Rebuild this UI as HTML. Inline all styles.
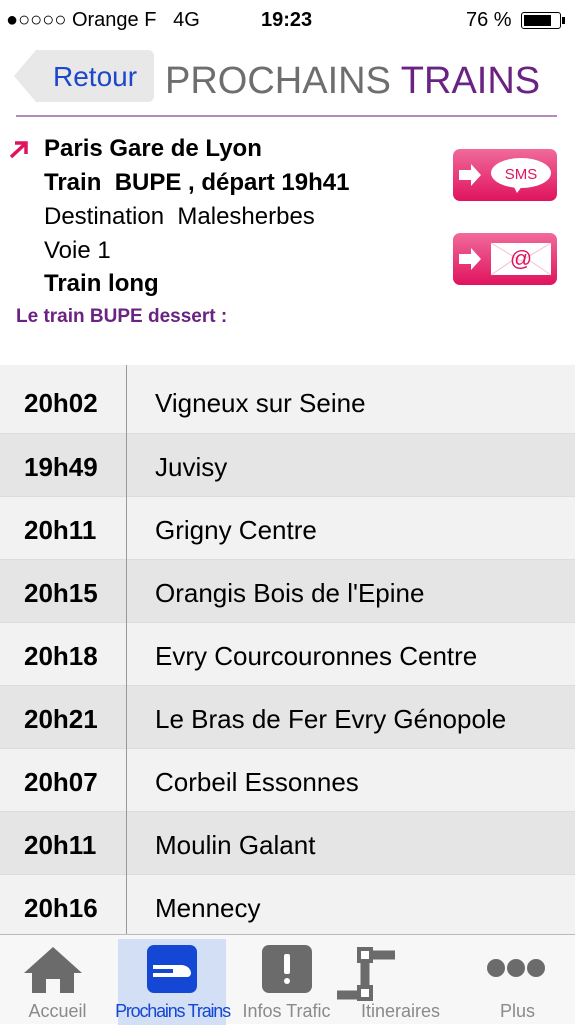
<!DOCTYPE html><html><head><meta charset="utf-8"><style>
*{margin:0;padding:0;box-sizing:border-box}
body{width:575px;height:1024px;overflow:hidden;background:#fff;font-family:"Liberation Sans",sans-serif;position:relative}
.sb{position:absolute;top:0;left:0;width:575px;height:40px;font-size:20px;color:#000}
.sb span{position:absolute;top:9px}
.hdr{position:absolute;top:40px;left:0;width:575px;height:78px}
.back{position:absolute;left:14px;top:10px;width:140px;height:52px;background:#e8e8e8;clip-path:polygon(22px 0,100% 0,100% 100%,22px 100%,0 50%);border-radius:0 6px 6px 0}
.back span{position:absolute;left:39px;top:11px;font-size:28px;color:#1c47c8}
.title{position:absolute;left:165px;top:20px;font-size:38px;color:#6e6e6e;letter-spacing:0}
.title b{font-weight:normal;color:#6a2382}
.line{position:absolute;top:115px;left:16px;width:541px;height:2px;background:#b58cb8}
.info{position:absolute;left:44px;font-size:24px;color:#000}
.btn{position:absolute;left:453px;width:104px;height:52px;border-radius:7px;background:linear-gradient(#f06a9a,#e0135e)}
.rows{position:absolute;top:365px;left:0;width:575px}
.row{height:63px;position:relative;font-size:26px;border-top:1px solid #ddd}
.row .t{position:absolute;left:24px;top:18px;font-weight:bold}
.row .n{position:absolute;left:155px;top:18px}
.tab{position:absolute;top:934px;left:0;width:575px;height:90px;background:#f7f7f7;border-top:1px solid #bbb}
.tab .l{position:absolute;top:66px;font-size:18px;color:#8a8a8a;width:115px;text-align:center}
</style></head><body>
<div class="sb"><span style="left:6px">●○○○○ Orange F&nbsp;&nbsp; 4G</span><span style="left:261px;font-weight:bold">19:23</span><span style="left:466px">76 %</span>
<div style="position:absolute;left:521px;top:12px;width:40px;height:17px;border:1.5px solid #000;border-radius:3px"><div style="margin:1.5px;width:27px;height:11px;background:#000"></div></div><div style="position:absolute;left:562px;top:17px;width:3px;height:7px;background:#000"></div></div>
<div class="hdr"><div class="back"><span>Retour</span></div><div class="title">PROCHAINS <b>TRAINS</b></div></div>
<div class="line"></div>
<svg style="position:absolute;left:8px;top:140px" width="22" height="20"><path d="M3 17 L17 4 M7 3 H18 V14" stroke="#e0135e" stroke-width="3.5" fill="none"/></svg>
<div class="info" style="top:135px;font-weight:bold">Paris Gare de Lyon</div>
<div class="info" style="top:169px;font-weight:bold">Train&nbsp; BUPE , départ 19h41</div>
<div class="info" style="top:203px">Destination&nbsp; Malesherbes</div>
<div class="info" style="top:237px">Voie 1</div>
<div class="info" style="top:270px;font-weight:bold">Train long</div>
<div style="position:absolute;left:16px;top:306px;font-size:19px;font-weight:bold;color:#6a2382">Le train BUPE dessert :</div>
<div class="btn" style="top:149px"><svg width="104" height="52"><path d="M6 21h12v-6l10 11-10 11v-6H6z" fill="#fff"/><ellipse cx="68" cy="24" rx="30" ry="15" fill="#fff"/><path d="M60 36l4 8 6-8z" fill="#fff"/><text x="68" y="30" font-size="15" fill="#e0135e" text-anchor="middle" font-family="Liberation Sans">SMS</text></svg></div>
<div class="btn" style="top:233px"><svg width="104" height="52"><path d="M6 21h12v-6l10 11-10 11v-6H6z" fill="#fff"/><rect x="38" y="10" width="60" height="32" fill="#fff"/><path d="M38 10l30 18 30-18M38 42l22-15M98 42l-22-15" stroke="#f2c0d0" fill="none"/><text x="68" y="33" font-size="22" fill="#e0135e" text-anchor="middle" font-family="Liberation Sans">@</text></svg></div>
<div class="rows" style="box-shadow:0 -2px 3px #ccc inset">
<div class="row" style="background:#f2f2f2;border-top:0;height:68px"><span class="t" style="top:23px">20h02</span><span class="n" style="top:23px">Vigneux sur Seine</span></div>
<div class="row" style="background:#e5e5e5"><span class="t">19h49</span><span class="n">Juvisy</span></div>
<div class="row" style="background:#f2f2f2"><span class="t">20h11</span><span class="n">Grigny Centre</span></div>
<div class="row" style="background:#e5e5e5"><span class="t">20h15</span><span class="n">Orangis Bois de l'Epine</span></div>
<div class="row" style="background:#f2f2f2"><span class="t">20h18</span><span class="n">Evry Courcouronnes Centre</span></div>
<div class="row" style="background:#e5e5e5"><span class="t">20h21</span><span class="n">Le Bras de Fer Evry Génopole</span></div>
<div class="row" style="background:#f2f2f2"><span class="t">20h07</span><span class="n">Corbeil Essonnes</span></div>
<div class="row" style="background:#e5e5e5"><span class="t">20h11</span><span class="n">Moulin Galant</span></div>
<div class="row" style="background:#f2f2f2"><span class="t">20h16</span><span class="n">Mennecy</span></div>
</div>
<div style="position:absolute;left:126px;top:365px;width:1px;height:570px;background:#999"></div>
<div class="tab">
<div style="position:absolute;left:118px;top:4px;width:108px;height:86px;background:#d3dff5"></div>
<svg style="position:absolute;left:22px;top:10px" width="62" height="50"><path d="M31 2L2 28h8v20h14V34h14v14h14V28h8z" fill="#6b6b6b"/></svg>
<div style="position:absolute;left:147px;top:10px;width:50px;height:48px;background:#1447d4;border-radius:7px"><svg width="50" height="48"><path d="M6 20h20v4H6zM6 28h38c0 0 0 4-4 4H6zM26 20h8c6 0 10 4 10 8H26z" fill="#fff"/></svg></div>
<div style="position:absolute;left:262px;top:10px;width:50px;height:48px;background:#6b6b6b;border-radius:7px"><div style="position:absolute;left:22px;top:9px;width:6px;height:20px;background:#fff;border-radius:2px"></div><div style="position:absolute;left:22px;top:33px;width:6px;height:6px;background:#fff;border-radius:3px"></div></div>
<svg style="position:absolute;left:335px;top:8px" width="62" height="58"><path d="M32 12h28M2 52h32M30 12v40" stroke="#6b6b6b" stroke-width="9" fill="none"/><rect x="24" y="6" width="12" height="12" fill="#fff" stroke="#6b6b6b" stroke-width="4"/><rect x="24" y="44" width="12" height="12" fill="#fff" stroke="#6b6b6b" stroke-width="4"/></svg>
<svg style="position:absolute;left:485px;top:22px" width="62" height="22"><circle cx="11" cy="11" r="9" fill="#6b6b6b"/><circle cx="31" cy="11" r="9" fill="#6b6b6b"/><circle cx="51" cy="11" r="9" fill="#6b6b6b"/></svg>
<div class="l" style="left:0">Accueil</div>
<div class="l" style="left:115px;color:#1447d4;letter-spacing:-1.2px">Prochains Trains</div>
<div class="l" style="left:229px">Infos Trafic</div>
<div class="l" style="left:343px">Itineraires</div>
<div class="l" style="left:460px">Plus</div>
</div>
</body></html>
